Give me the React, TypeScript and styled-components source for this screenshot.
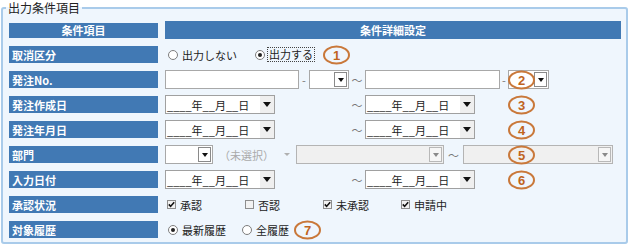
import React from "react";
import styled, { createGlobalStyle } from "styled-components";

const GlobalStyle = createGlobalStyle`
  html, body { margin: 0; padding: 0; background: #fff; }
  body {
    font-family: "Noto Sans CJK JP", "Noto Sans", sans-serif;
    font-size: 11px;
    color: #222;
  }
  * { box-sizing: border-box; }
`;

const Frame = styled.fieldset`
  margin: 0 0 0 1px;
  width: 627px;
  min-width: 0;
  border: 2px solid #a9cbea;
  border-radius: 3px;
  background: #eff6fd;
  padding: 5px 5px 3px 6px;
`;

const Legend = styled.legend`
  padding: 0 2px;
  margin-left: -3px;
  font-size: 12px;
  line-height: 16px;
  color: #222;
`;

const Table = styled.div`
  display: grid;
  grid-template-columns: 149px 456px;
  grid-template-rows: 18px repeat(8, 19px);
  column-gap: 7px;
  row-gap: 6px;
`;

const HeadCell = styled.div<{ $short?: boolean }>`
  background: #4179b4;
  color: #fff;
  font-weight: bold;
  font-size: 11px;
  display: flex;
  align-items: center;
  justify-content: center;
  height: ${(p) => (p.$short ? "15px" : "18px")};
  align-self: ${(p) => (p.$short ? "center" : "stretch")};
`;

const LabelCell = styled.div`
  background: #4179b4;
  color: #fff;
  font-weight: bold;
  font-size: 11px;
  height: 17px;
  align-self: center;
  display: flex;
  align-items: center;
  padding-left: 3px;
`;

const DetailCell = styled.div`
  position: relative;
  display: flex;
  align-items: center;
  height: 19px;
`;

const TextBox = styled.div<{ $w: number }>`
  width: ${(p) => p.$w}px;
  height: 19px;
  border: 1px solid #a8a8a8;
  background: #fff;
  flex: none;
`;

const Sep = styled.span<{ $w: number }>`
  width: ${(p) => p.$w}px;
  flex: none;
  text-align: center;
  color: #777;
  font-size: 11px;
`;

const SelectBox = styled.div<{ $w: number; $tone: "white" | "gray" | "bare" }>`
  width: ${(p) => p.$w}px;
  height: 19px;
  flex: none;
  display: flex;
  align-items: center;
  justify-content: space-between;
  padding: 0 1px 0 ${(p) => (p.$tone === "bare" ? "5px" : "0")};
  border: 1px solid
    ${(p) => (p.$tone === "bare" ? "transparent" : p.$tone === "gray" ? "#b4b4b4" : "#a8a8a8")};
  background: ${(p) => (p.$tone === "white" ? "#fff" : p.$tone === "gray" ? "#f0f0f0" : "transparent")};
  color: #aaa;
`;

const DropButton = styled.div<{ $dim?: boolean }>`
  width: 13px;
  height: 15px;
  flex: none;
  border: 1px solid ${(p) => (p.$dim ? "#b8b8b8" : "#8a8a8a")};
  background: ${(p) => (p.$dim ? "#f6f6f6" : "#fff")};
  display: flex;
  align-items: center;
  justify-content: center;
  &::after {
    content: "";
    border-left: 3px solid transparent;
    border-right: 3px solid transparent;
    border-top: 4px solid ${(p) => (p.$dim ? "#8a8a8a" : "#111")};
  }
`;

const BareArrow = styled.span`
  width: 14px;
  display: flex;
  justify-content: center;
  &::after {
    content: "";
    border-left: 3px solid transparent;
    border-right: 3px solid transparent;
    border-top: 3px solid #b0b0b0;
  }
`;

const DateBox = styled.div`
  width: 110px;
  height: 19px;
  flex: none;
  border: 1px solid #a0a0a0;
  background: #fff;
  display: flex;
  align-items: center;
  color: #222;
`;

const DateText = styled.span`
  flex: 1;
  padding-left: 1px;
  white-space: pre;
`;

const DateButton = styled.div`
  width: 14px;
  height: 17px;
  background: #efefef;
  display: flex;
  align-items: center;
  justify-content: center;
  &::after {
    content: "";
    border-left: 4px solid transparent;
    border-right: 4px solid transparent;
    border-top: 5px solid #111;
  }
`;

const Spacer = styled.div<{ $w: number }>`
  width: ${(p) => p.$w}px;
  flex: none;
`;

const Option = styled.label<{ $w?: number; $pad: number }>`
  display: flex;
  align-items: center;
  gap: 4px;
  padding-left: ${(p) => p.$pad}px;
  width: ${(p) => (p.$w ? `${p.$w}px` : "auto")};
  flex: none;
  color: #222;
`;

const RadioMark = styled.span<{ $on?: boolean }>`
  width: 10px;
  height: 10px;
  border-radius: 50%;
  border: 1px solid #7d7d7d;
  background: #fff;
  display: flex;
  align-items: center;
  justify-content: center;
  flex: none;
  &::after {
    content: "";
    width: 4px;
    height: 4px;
    border-radius: 50%;
    background: ${(p) => (p.$on ? "#222" : "transparent")};
  }
`;

const CheckMark = styled.span`
  width: 9px;
  height: 9px;
  border: 1px solid #8e8e8e;
  background: #f2f2f2;
  display: flex;
  align-items: center;
  justify-content: center;
  flex: none;
`;

const Focused = styled.span`
  border: 1px dotted #444;
  padding: 0 1px;
  margin-left: -2px;
  line-height: 13px;
`;

const Badge = styled.span<{ $left: number }>`
  position: absolute;
  left: ${(p) => p.$left}px;
  top: 50%;
  transform: translateY(-50%);
  width: 27px;
  height: 19px;
  border: 2px solid #c9783a;
  border-radius: 50%;
  color: #c0641e;
  font-family: "Liberation Sans", Arial, sans-serif;
  font-weight: bold;
  font-size: 13px;
  display: flex;
  align-items: center;
  justify-content: center;
  line-height: 1;
`;

const Check = ({ on }: { on: boolean }) => (
  <CheckMark>
    {on && (
      <svg width="7" height="7" viewBox="0 0 7 7">
        <polyline points="0.8,3.4 2.6,5.4 6.2,1.2" fill="none" stroke="#111" strokeWidth="1.6" />
      </svg>
    )}
  </CheckMark>
);

const DateField = () => (
  <DateBox>
    <DateText>____年__月__日</DateText>
    <DateButton />
  </DateBox>
);

const DateRange = ({ n }: { n: string }) => (
  <DetailCell>
    <DateField />
    <Spacer $w={74} />
    <Sep $w={16}>～</Sep>
    <DateField />
    <Badge $left={343}>{n}</Badge>
  </DetailCell>
);

export default function App() {
  return (
    <>
      <GlobalStyle />
      <Frame>
        <Legend>出力条件項目</Legend>
        <Table>
          <HeadCell $short>条件項目</HeadCell>
          <HeadCell>条件詳細設定</HeadCell>

          <LabelCell>取消区分</LabelCell>
          <DetailCell>
            <Option $pad={3} $w={87}>
              <RadioMark />
              出力しない
            </Option>
            <Option $pad={3}>
              <RadioMark $on />
              <Focused>出力する</Focused>
            </Option>
            <Badge $left={158}>1</Badge>
          </DetailCell>

          <LabelCell>発注No.</LabelCell>
          <DetailCell>
            <TextBox $w={134} />
            <Sep $w={10}>-</Sep>
            <SelectBox $w={40} $tone="white">
              <span />
              <DropButton />
            </SelectBox>
            <Sep $w={16}>～</Sep>
            <TextBox $w={135} />
            <Sep $w={8}>-</Sep>
            <SelectBox $w={41} $tone="white">
              <span />
              <DropButton />
            </SelectBox>
            <Badge $left={343}>2</Badge>
          </DetailCell>

          <LabelCell>発注作成日</LabelCell>
          <DateRange n="3" />

          <LabelCell>発注年月日</LabelCell>
          <DateRange n="4" />

          <LabelCell>部門</LabelCell>
          <DetailCell>
            <SelectBox $w={48} $tone="white">
              <span />
              <DropButton />
            </SelectBox>
            <SelectBox $w={83} $tone="bare">
              <span>（未選択）</span>
              <BareArrow />
            </SelectBox>
            <SelectBox $w={148} $tone="gray">
              <span />
              <DropButton $dim />
            </SelectBox>
            <Sep $w={19}>～</Sep>
            <SelectBox $w={150} $tone="gray">
              <span />
              <DropButton $dim />
            </SelectBox>
            <Badge $left={343}>5</Badge>
          </DetailCell>

          <LabelCell>入力日付</LabelCell>
          <DateRange n="6" />

          <LabelCell>承認状況</LabelCell>
          <DetailCell>
            <Option $pad={2} $w={78}>
              <Check on />
              承認
            </Option>
            <Option $pad={2} $w={78}>
              <Check on={false} />
              否認
            </Option>
            <Option $pad={2} $w={78}>
              <Check on />
              未承認
            </Option>
            <Option $pad={2}>
              <Check on />
              申請中
            </Option>
          </DetailCell>

          <LabelCell>対象履歴</LabelCell>
          <DetailCell>
            <Option $pad={3} $w={74}>
              <RadioMark $on />
              最新履歴
            </Option>
            <Option $pad={3}>
              <RadioMark />
              全履歴
            </Option>
            <Badge $left={129}>7</Badge>
          </DetailCell>
        </Table>
      </Frame>
    </>
  );
}
